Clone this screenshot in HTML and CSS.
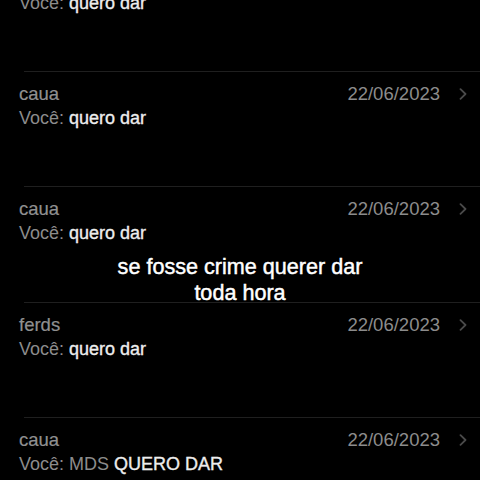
FILE: index.html
```html
<!DOCTYPE html>
<html lang="pt">
<head>
<meta charset="utf-8">
<link rel="stylesheet" href="styles.css">
</head>
<body>
<div class="screen">
  <ul class="list">
    <li class="row first">
      <div class="text">
        <div class="top"><span class="name">caua</span></div>
        <div class="preview"><span class="you">Você:</span> <span class="msg">quero dar</span></div>
      </div>
    </li>
    <li class="row">
      <div class="text">
        <div class="top"><span class="name">caua</span><span class="date">22/06/2023</span><svg class="chev" viewBox="0 0 8 12"><path d="M1.5 1.2 L6.5 6 L1.5 10.8"/></svg></div>
        <div class="preview"><span class="you">Você:</span> <span class="msg">quero dar</span></div>
      </div>
    </li>
    <li class="row">
      <div class="text">
        <div class="top"><span class="name">caua</span><span class="date">22/06/2023</span><svg class="chev" viewBox="0 0 8 12"><path d="M1.5 1.2 L6.5 6 L1.5 10.8"/></svg></div>
        <div class="preview"><span class="you">Você:</span> <span class="msg">quero dar</span></div>
      </div>
    </li>
    <li class="row">
      <div class="text">
        <div class="top"><span class="name">ferds</span><span class="date">22/06/2023</span><svg class="chev" viewBox="0 0 8 12"><path d="M1.5 1.2 L6.5 6 L1.5 10.8"/></svg></div>
        <div class="preview"><span class="you">Você:</span> <span class="msg">quero dar</span></div>
      </div>
    </li>
    <li class="row">
      <div class="text">
        <div class="top"><span class="name">caua</span><span class="date">22/06/2023</span><svg class="chev" viewBox="0 0 8 12"><path d="M1.5 1.2 L6.5 6 L1.5 10.8"/></svg></div>
        <div class="preview"><span class="you">Você: MDS</span> <span class="msg">QUERO DAR</span></div>
      </div>
    </li>
  </ul>
  <div class="caption">se fosse crime querer dar<br>toda hora</div>
</div>
</body>
</html>
```

FILE: styles.css
```css
* { box-sizing: border-box; }
html, body {
  margin: 0;
  padding: 0;
  background: #000;
}
.screen {
  position: relative;
  width: 480px;
  height: 480px;
  overflow: hidden;
  background: #000;
  font-family: "Liberation Sans", Arial, sans-serif;
}
.list {
  list-style: none;
  margin: -44.33px 0 0 0;
  padding: 0;
}
.row {
  height: 115.33px;
  border-top: 1px solid #1f1f1f;
  margin-left: 24px;
}
.row.first {
  border-top: none;
  padding-top: 1px;
}
.text {
  margin-left: -5px;
  padding-top: 10px;
}
.top {
  display: flex;
  align-items: center;
  height: 24px;
  padding-right: 13px;
}
.name {
  flex: 1;
  font-size: 18.5px;
  line-height: 24px;
  color: #909090;
  -webkit-text-stroke: 0.2px #909090;
}
.date {
  font-size: 18.5px;
  line-height: 24px;
  color: #8c8c8c;
}
.chev {
  width: 8px;
  height: 12px;
  margin-left: 19px;
  fill: none;
  stroke: #4a4a4a;
  stroke-width: 1.8;
  stroke-linecap: round;
  stroke-linejoin: round;
}
.preview {
  font-size: 18px;
  line-height: 24px;
  color: #8c8c8c;
}
.msg {
  color: #ededed;
  -webkit-text-stroke: 0.35px #ededed;
}
.caption {
  position: absolute;
  left: 0;
  right: 0;
  top: 254px;
  text-align: center;
  color: #fff;
  font-size: 21.6px;
  line-height: 25.5px;
  -webkit-text-stroke: 0.45px #fff;
  text-shadow: 0 0 2px rgba(0,0,0,0.6);
}
```
